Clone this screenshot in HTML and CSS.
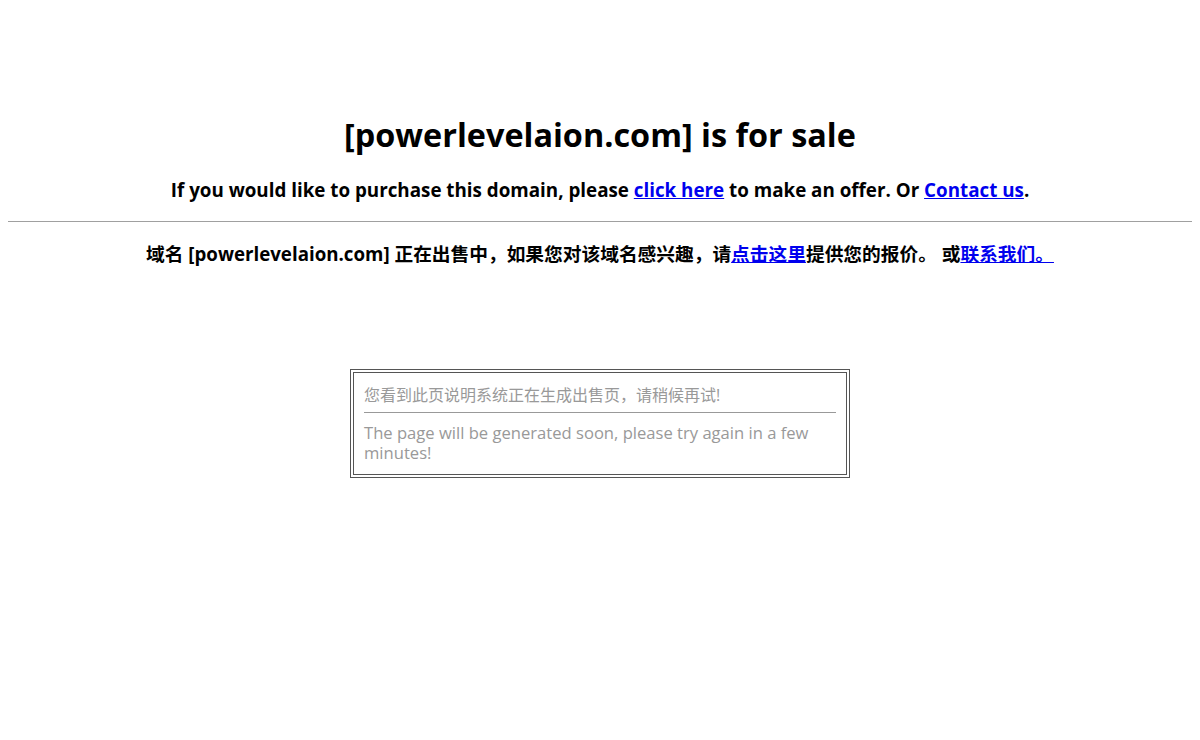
FILE: index.html
```html
<!DOCTYPE html>
<html lang="zh-CN">
<head>
<meta charset="utf-8">
<title>powerlevelaion.com is for sale</title>
<link rel="stylesheet" href="styles.css">
</head>
<body>
<div class="top">
  <h1 class="title">[powerlevelaion.com] is for sale</h1>
  <p class="en-line">If you would like to purchase this domain, please <a href="#">click here</a> to make an offer. Or <a href="#">Contact us</a>.</p>
</div>
<hr class="rule">
<p class="cn-line">域名 [powerlevelaion.com] 正在出售中，如果您对该域名感兴趣，请<a href="#">点击这里</a>提供您的报价。 或<a href="#">联系我们。 </a></p>
<div class="box">
  <p class="box-cn">您看到此页说明系统正在生成出售页，请稍候再试!</p>
  <hr class="box-rule">
  <p class="box-en">The page will be generated soon, please try again in a few minutes!</p>
</div>
</body>
</html>
```
FILE: styles.css
```css
body {
  margin: 8px;
  font-family: "Open Sans", "Noto Sans CJK SC", sans-serif;
  color: #000;
  background: #fff;
}
.top {
  padding-top: 106px;
  text-align: center;
}
.title {
  margin: 0;
  font-size: 32.4px;
  line-height: 40px;
  font-weight: 700;
}
.en-line {
  margin: 22px 0 0;
  font-size: 18.8px;
  line-height: 28px;
  font-weight: 700;
}
a {
  color: #0000ee;
  text-decoration: underline;
}
.rule {
  margin: 17px 0 0;
  border: 0;
  border-top: 1px solid #a0a0a0;
  height: 0;
}
.cn-line {
  margin: 19px 0 0;
  text-align: center;
  font-size: 18.72px;
  line-height: 26px;
  font-weight: 700;
}
.box {
  width: 500px;
  box-sizing: border-box;
  margin: 102px auto 0;
  border: 4px double #555;
  padding: 12px 10px 11px;
  color: #999;
  font-size: 16px;
  line-height: 20px;
}
.box-cn {
  margin: 0;
}
.box-rule {
  margin: 7px 0 10px;
  border: 0;
  border-top: 1px solid #999;
  height: 0;
}
.box-en {
  margin: 0;
  font-size: 16.6px;
}
```
